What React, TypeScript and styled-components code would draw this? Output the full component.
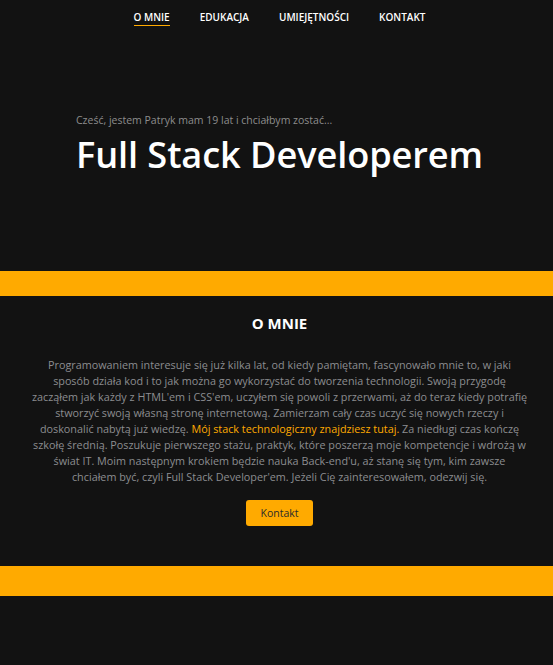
import React from "react";
import styled, { createGlobalStyle } from "styled-components";

const ORANGE = "#ffaa00";
const BG = "#121212";
const FONT = `"Open Sans", "Noto Sans", sans-serif`;

const Global = createGlobalStyle`
  html, body { margin: 0; padding: 0; background: ${BG}; }
  body { font-family: ${FONT}; -webkit-font-smoothing: antialiased; }
  * { box-sizing: border-box; }
`;

const Page = styled.div`
  min-height: 665px;
  background: ${BG};
  display: flex;
  flex-direction: column;
`;

const Nav = styled.nav`
  height: 35px;
  display: flex;
  justify-content: center;
  align-items: flex-start;
  padding: 11px 0 0 6px;
  gap: 30px;
`;

const NavLink = styled.a<{ $active?: boolean }>`
  color: #ffffff;
  font-size: 10px;
  font-weight: 600;
  text-transform: uppercase;
  text-decoration: none;
  line-height: 12px;
  padding-bottom: 2px;
  border-bottom: 1.5px solid ${(p) => (p.$active ? ORANGE : "transparent")};
  cursor: pointer;
`;

const Hero = styled.header`
  height: 236px;
  padding: 78px 0 0 76px;
  display: flex;
  flex-direction: column;
`;

const Greeting = styled.p`
  margin: 0;
  color: #8d8d8d;
  font-size: 10.5px;
  line-height: 14px;
`;

const Title = styled.h1`
  margin: 5px 0 0;
  color: #ffffff;
  font-size: 36.2px;
  font-weight: 600;
  line-height: 44px;
  letter-spacing: -0.1px;
`;

const Stripe = styled.div<{ $h: number }>`
  height: ${(p) => p.$h}px;
  background: ${ORANGE};
`;

const About = styled.section`
  height: 270px;
  display: flex;
  flex-direction: column;
  align-items: center;
  padding: 16px 0 0 6px;
`;

const SectionTitle = styled.h2`
  margin: 0;
  color: #ffffff;
  font-size: 15px;
  font-weight: 700;
  line-height: 22px;
`;

const Text = styled.p`
  margin: 23px 0 0;
  color: #8c8d90;
  font-size: 10.8px;
  line-height: 16px;
  text-align: center;
  white-space: nowrap;
`;

const Highlight = styled.span`
  color: ${ORANGE};
`;

const Button = styled.button`
  margin-top: 15px;
  width: 67px;
  height: 26px;
  border: none;
  border-radius: 3px;
  background: ${ORANGE};
  color: #2a2a2a;
  font-family: ${FONT};
  font-size: 10.5px;
  font-weight: 500;
  cursor: pointer;
`;

const Filler = styled.div`
  flex: 1;
`;

export default function App() {
  return (
    <Page>
      <Global />
      <Nav>
        <NavLink $active>O mnie</NavLink>
        <NavLink>Edukacja</NavLink>
        <NavLink>Umiejętności</NavLink>
        <NavLink>Kontakt</NavLink>
      </Nav>
      <Hero>
        <Greeting>Cześć, jestem Patryk mam 19 lat i chciałbym zostać...</Greeting>
        <Title>Full Stack Developerem</Title>
      </Hero>
      <Stripe $h={25} />
      <About>
        <SectionTitle>O MNIE</SectionTitle>
        <Text>
          Programowaniem interesuje się już kilka lat, od kiedy pamiętam, fascynowało mnie to, w jaki
          <br />
          sposób działa kod i to jak można go wykorzystać do tworzenia technologii. Swoją przygodę
          <br />
          zacząłem jak każdy z HTML'em i CSS'em, uczyłem się powoli z przerwami, aż do teraz kiedy potrafię
          <br />
          stworzyć swoją własną stronę internetową. Zamierzam cały czas uczyć się nowych rzeczy i
          <br />
          doskonalić nabytą już wiedzę. <Highlight>Mój stack technologiczny znajdziesz tutaj.</Highlight> Za niedługi czas kończę
          <br />
          szkołę średnią. Poszukuje pierwszego stażu, praktyk, które poszerzą moje kompetencje i wdrożą w
          <br />
          świat IT. Moim następnym krokiem będzie nauka Back-end'u, aż stanę się tym, kim zawsze
          <br />
          chciałem być, czyli Full Stack Developer'em. Jeżeli Cię zainteresowałem, odezwij się.
        </Text>
        <Button>Kontakt</Button>
      </About>
      <Stripe $h={30} />
      <Filler />
    </Page>
  );
}
